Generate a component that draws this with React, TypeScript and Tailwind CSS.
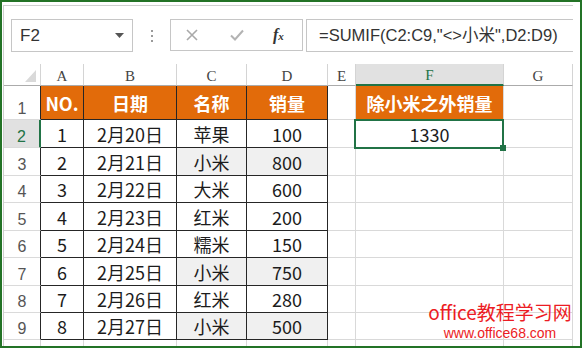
import React from "react";

const COLW = ["w-[37px]", "w-[43px]", "w-[93px]", "w-[70px]", "w-[81px]", "w-[28px]", "w-[148px]", "w-[69px]"];
const ROWH = ["h-[28px]", "h-[28px]", "h-[27px]", "h-[28px]", "h-[27px]", "h-[28px]", "h-[27px]", "h-[27px]"];

const DATA: [number, string, string, number][] = [
  [1, "2月20日", "苹果", 100],
  [2, "2月21日", "小米", 800],
  [3, "2月22日", "大米", 600],
  [4, "2月23日", "红米", 200],
  [5, "2月24日", "糯米", 150],
  [6, "2月25日", "小米", 750],
  [7, "2月26日", "红米", 280],
  [8, "2月27日", "小米", 500],
];

const CJK = "font-['Noto_Sans_CJK_SC','Noto_Sans',sans-serif]";

function RowHead({ n, h, sel }: { n: number | string; h: string; sel?: boolean }) {
  return (
    <div
      className={`${COLW[0]} ${h} shrink-0 flex items-end justify-center pb-[1px] border-b border-[#dadada] font-['Liberation_Sans',sans-serif] text-[16px] leading-none ${
        sel ? "bg-[#e1e1e1] text-[#217346] border-r-2 border-r-[#217346]" : "bg-white text-[#555] border-r border-r-[#262626]"
      }`}
    >
      <span className="pb-[1px]">{n}</span>
    </div>
  );
}

function TCell({ w, h, gray, children }: { w: string; h: string; gray?: boolean; children?: React.ReactNode }) {
  return (
    <div
      className={`${w} ${h} shrink-0 flex items-center justify-center border-r border-b border-[#262626] text-[18px] leading-none text-[#1c1c1c] ${CJK} ${
        gray ? "bg-[#f0f0f0]" : "bg-white"
      }`}
    >
      {children}
    </div>
  );
}

function GCell({ w, h, children }: { w: string; h: string; children?: React.ReactNode }) {
  return <div className={`${w} ${h} shrink-0 border-r border-b border-[#d9d9d9] bg-white`}>{children}</div>;
}

export default function App() {
  const letters = ["A", "B", "C", "D", "E", "F", "G"];
  return (
    <div className="w-[585px] h-[349px] bg-white overflow-hidden">
      <div className="relative w-[582px] h-[348px] border-2 border-[#237326] pl-px pt-[3px] overflow-hidden">
        <div className="w-[570px] h-[341px] border-l border-t border-[#cfcfcf] flex flex-col overflow-hidden bg-white">
          {/* formula bar */}
          <div className="h-[58px] shrink-0 flex items-start pt-[13px] pl-[7px]">
            <div className="w-[122px] h-[33px] border border-[#c6c6c6] flex items-center justify-between pl-[8px] pr-[8px]">
              <span className="font-['Liberation_Sans',sans-serif] text-[17px] text-[#333] leading-none">F2</span>
              <svg width="9" height="5" viewBox="0 0 9 5">
                <path d="M0 0 L9 0 L4.5 5 Z" fill="#555" />
              </svg>
            </div>
            <div className="w-[37px] h-[33px] flex flex-col items-center justify-center gap-[3px]">
              <div className="w-[2px] h-[2px] bg-[#9a9a9a]" />
              <div className="w-[2px] h-[2px] bg-[#9a9a9a]" />
              <div className="w-[2px] h-[2px] bg-[#9a9a9a]" />
            </div>
            <div className="w-[133px] h-[32px] border border-[#c6c6c6] flex items-center">
              <svg width="12" height="12" viewBox="0 0 12 12" className="ml-[15px]">
                <path d="M1 1 L11 11 M11 1 L1 11" stroke="#a9a9a9" strokeWidth="1.6" />
              </svg>
              <svg width="14" height="12" viewBox="0 0 14 12" className="ml-[32px]">
                <path d="M1 6.5 L5 10.5 L13 1.5" stroke="#b3b3b3" strokeWidth="2" fill="none" />
              </svg>
              <span className="ml-[29px] font-['Liberation_Serif',serif] italic font-bold text-[16px] text-[#333] leading-none">
                f<span className="text-[11px]">x</span>
              </span>
            </div>
            <div className="ml-[3px] flex-1 h-[33px] border-t border-b border-l border-[#c6c6c6] flex items-center pl-[12px]">
              <span className="font-['Liberation_Sans','Noto_Sans_CJK_SC',sans-serif] text-[16.5px] text-[#333] leading-none whitespace-nowrap">
                =SUMIF(C2:C9,"&lt;&gt;小米",D2:D9)
              </span>
            </div>
          </div>

          {/* column header row */}
          <div className="flex shrink-0">
            <div className={`${COLW[0]} h-[22px] shrink-0 border-r border-b border-[#d4d4d4] border-b-[#ababab] flex items-end justify-end pr-[4px] pb-[3px]`}>
              <svg width="11" height="12" viewBox="0 0 11 12">
                <path d="M11 0 L11 12 L0 12 Z" fill="#d9d9d9" />
              </svg>
            </div>
            {letters.map((l, i) => {
              const sel = l === "F";
              return (
                <div
                  key={l}
                  className={`${COLW[i + 1]} h-[22px] shrink-0 flex items-end justify-center pb-[1px] border-r border-r-[#d4d4d4] font-['Liberation_Serif',serif] text-[15px] leading-none ${
                    sel ? "bg-[#e1e1e1] text-[#217346] border-b-2 border-b-[#217346]" : "bg-white text-[#444] border-b border-b-[#ababab]"
                  }`}
                >
                  {l}
                </div>
              );
            })}
          </div>

          {/* row 1 */}
          <div className="flex shrink-0">
            <RowHead n={1} h="h-[34px]" />
            {["NO.", "日期", "名称", "销量"].map((t, i) => (
              <div
                key={t}
                className={`${COLW[i + 1]} h-[34px] shrink-0 flex items-center justify-center bg-[#e26b0a] border-r border-b border-[#262626] text-white font-bold text-[18px] leading-none ${CJK}`}
              >
                {t}
              </div>
            ))}
            <GCell w={COLW[5]} h="h-[34px]" />
            <div className={`${COLW[6]} h-[34px] shrink-0 flex items-center justify-center bg-[#e26b0a] border-r border-b border-[#d9d9d9] text-white font-bold text-[18px] leading-none ${CJK}`}>
              除小米之外销量
            </div>
            <GCell w={COLW[7]} h="h-[34px]" />
          </div>

          {/* data rows */}
          {DATA.map((r, idx) => {
            const h = ROWH[idx];
            const gray = r[2] === "小米";
            return (
              <div key={idx} className="flex shrink-0">
                <RowHead n={idx + 2} h={h} sel={idx === 0} />
                <TCell w={COLW[1]} h={h}>{r[0]}</TCell>
                <TCell w={COLW[2]} h={h}>{r[1]}</TCell>
                <TCell w={COLW[3]} h={h} gray={gray}>{r[2]}</TCell>
                <TCell w={COLW[4]} h={h} gray={gray}>{r[3]}</TCell>
                <GCell w={COLW[5]} h={h} />
                {idx === 0 ? (
                  <div className={`${COLW[6]} ${h} shrink-0 relative flex items-center justify-center border-r border-b border-[#d9d9d9] text-[18px] leading-none text-[#1c1c1c] ${CJK}`}>
                    1330
                    <div className="absolute left-[-2px] top-[-1px] w-[150px] h-[30px] border-2 border-[#217346]" />
                    <div className="absolute left-[144px] top-[25px] w-[6px] h-[6px] bg-[#217346]" />
                  </div>
                ) : (
                  <GCell w={COLW[6]} h={h} />
                )}
                <GCell w={COLW[7]} h={h} />
              </div>
            );
          })}

          {/* partial row 10 */}
          <div className="flex shrink-0">
            <div className={`${COLW[0]} h-[28px] shrink-0 border-r border-b border-[#d4d4d4]`} />
            {[1, 2, 3, 4, 5, 6, 7].map((i) => (
              <GCell key={i} w={COLW[i]} h="h-[28px]" />
            ))}
          </div>
        </div>

        {/* watermark */}
        <div className="absolute left-[427px] top-[299px] w-[142px] flex flex-col items-center text-[#ec1c24]">
          <span className={`${CJK} text-[19px] leading-[22px] whitespace-nowrap`}>office教程学习网</span>
          <span className="font-['Liberation_Sans',sans-serif] text-[14px] leading-[16px] mt-[2px] whitespace-nowrap">www.office68.com</span>
        </div>
      </div>
    </div>
  );
}
